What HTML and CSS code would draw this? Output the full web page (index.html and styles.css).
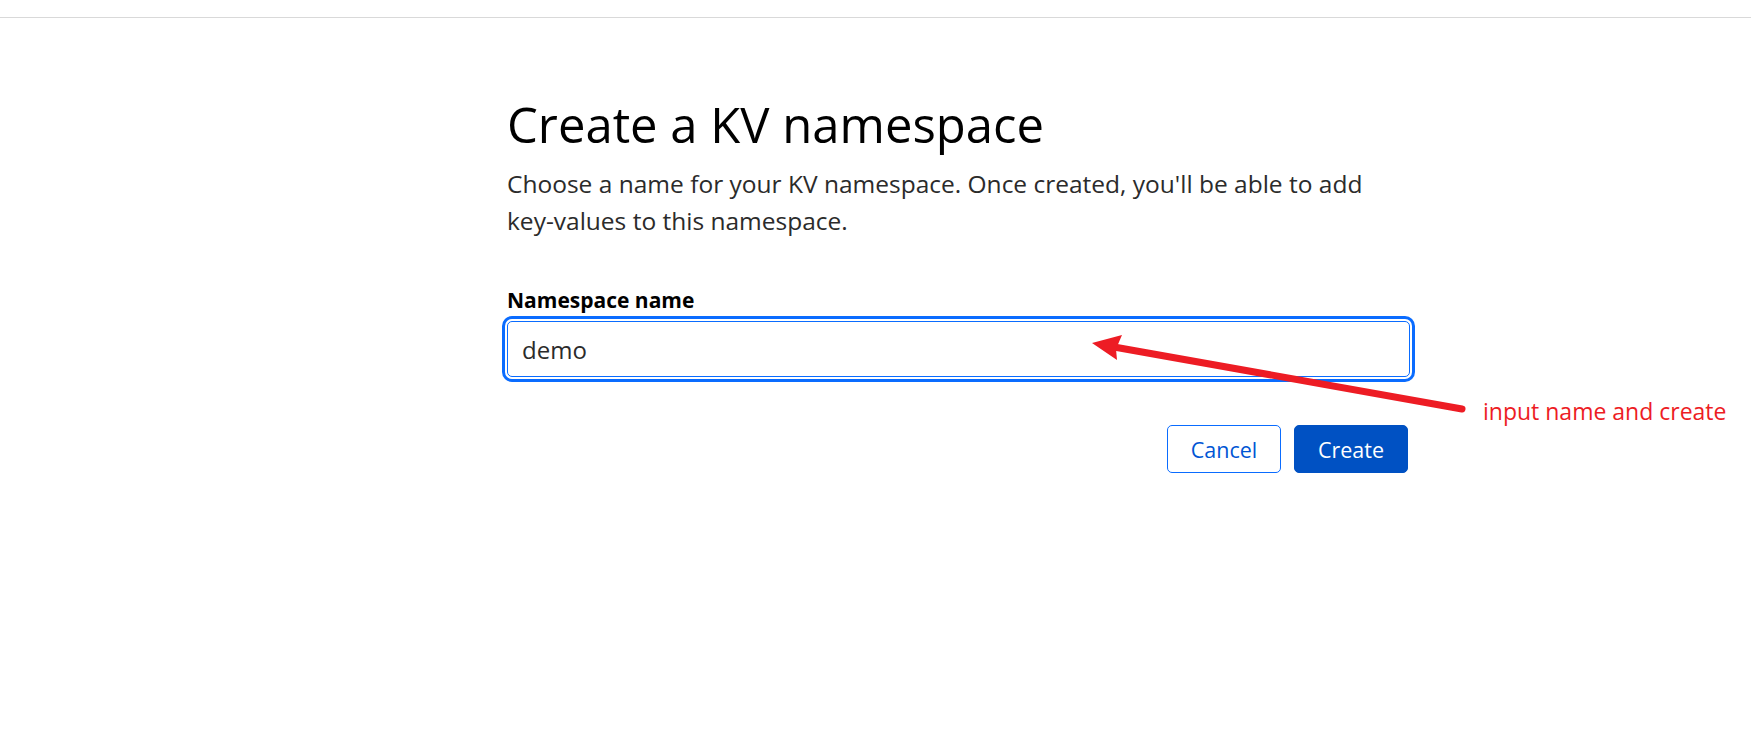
FILE: index.html
```html
<!DOCTYPE html>
<html lang="en">
<head>
<meta charset="utf-8">
<title>Create a KV namespace</title>
<link rel="stylesheet" href="styles.css">
</head>
<body>
<header class="topbar"></header>
<main class="page">
  <section class="panel">
    <h1 class="title">Create a KV namespace</h1>
    <p class="lead">Choose a name for your KV namespace. Once created, you'll be able to add <span class="nowrap">key-values</span> to this namespace.</p>
    <form class="form">
      <label class="label" for="ns">Namespace name</label>
      <div class="field"><input id="ns" class="input" type="text" value="demo"></div>
      <div class="actions">
        <button type="button" class="btn btn-outline">Cancel</button>
        <button type="button" class="btn btn-primary">Create</button>
      </div>
    </form>
  </section>
</main>
<svg class="annot" width="1751" height="732" viewBox="0 0 1751 732" aria-hidden="true">
  <line x1="1462" y1="409" x2="1114" y2="347" stroke="#ed1c24" stroke-width="7" stroke-linecap="round"/>
  <polygon points="1092,343 1122,335 1116,349 1117,360" fill="#ed1c24"/>
</svg>
<div class="annot-text">input name and create</div>
</body>
</html>
```

FILE: styles.css
```css
html, body {
  margin: 0;
  padding: 0;
  background: #ffffff;
}
body {
  font-family: "Open Sans", "Noto Sans", "Liberation Sans", sans-serif;
  color: #000;
  position: relative;
  width: 1751px;
  height: 732px;
  overflow: hidden;
}
.topbar {
  height: 17px;
  border-bottom: 1px solid #d9d9d9;
}
.page {
  padding-left: 507px;
}
.panel {
  width: 903px;
  display: flex;
  flex-direction: column;
}
.title {
  margin: 77px 0 0 0;
  font-size: 49px;
  font-weight: 400;
  line-height: 59px;
  color: #000;
}
.lead {
  margin: 11px 0 0 0;
  font-size: 24.5px;
  line-height: 37px;
  color: #2b2b2b;
}
.nowrap {
  white-space: nowrap;
}
.form {
  display: flex;
  flex-direction: column;
  margin-top: 47px;
}
.label {
  font-size: 21px;
  font-weight: 700;
  line-height: 28px;
  color: #000;
}
.field {
  margin-top: 7px;
}
.input {
  box-sizing: border-box;
  width: 100%;
  height: 56px;
  margin: 0;
  padding: 0 14px;
  border: 1px solid #0a6cff;
  border-radius: 5px;
  box-shadow: 0 0 0 2px #ffffff, 0 0 0 5px #0a6cff;
  font-family: inherit;
  font-size: 24px;
  color: #2b2b2b;
  outline: none;
  background: #fff;
}
.actions {
  display: flex;
  justify-content: flex-end;
  gap: 13px;
  margin-top: 48px;
  padding-right: 2px;
}
.btn {
  box-sizing: border-box;
  height: 48px;
  border-radius: 5px;
  font-family: inherit;
  font-size: 21.5px;
  cursor: pointer;
  padding: 0;
}
.btn-outline {
  width: 114px;
  background: #fff;
  border: 1px solid #0a6cff;
  color: #0055d4;
}
.btn-primary {
  width: 114px;
  background: #0051c3;
  border: 1px solid #0051c3;
  color: #fff;
}
.annot {
  position: absolute;
  left: 0;
  top: 0;
  pointer-events: none;
}
.annot-text {
  position: absolute;
  left: 1483px;
  top: 396px;
  font-size: 23px;
  line-height: 30px;
  color: #ed1c24;
  white-space: nowrap;
}
```
